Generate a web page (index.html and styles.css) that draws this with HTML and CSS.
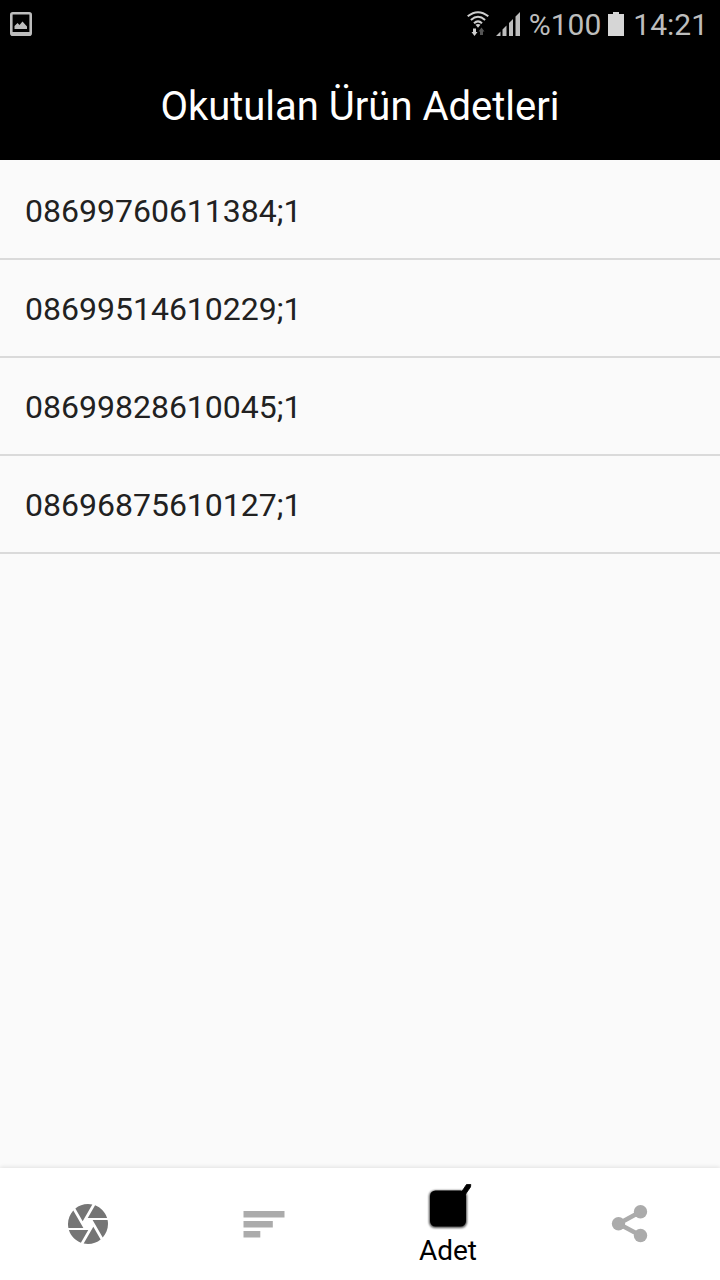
FILE: index.html
```html
<!DOCTYPE html>
<html lang="tr">
<head>
  <meta charset="UTF-8">
  <title>Okutulan Ürün Adetleri</title>
  <link rel="stylesheet" href="styles.css">
</head>
<body>
  <div class="status-bar">
    <svg class="picture-icon" width="22" height="24" viewBox="0 0 22 24">
      <rect x="1.3" y="1.3" width="19.4" height="21.4" rx="1.5" fill="none" stroke="#bdbdbd" stroke-width="2.6"/>
      <path d="M2 20h18v3H2zM4.500 17v-3l3-3 2 2 3-3.500 4.500 5V17z" fill="#bdbdbd"/>
    </svg>
    <div class="status-right">
      <svg class="wifi-icon" width="22" height="26" viewBox="0 0 22 26">
        <g fill="none" stroke="#cfcfcf" stroke-width="2">
          <path d="M.7 5.300Q11-2.900 21.300 5.300"/>
          <path d="M3.900 8.900Q11 2.700 18.100 8.900"/>
          <path d="M7 12.200Q11 8.500 15 12.200"/>
        </g>
        <path d="M8.500 13.800Q11 12.300 13.500 13.800L11 16.800z" fill="#cfcfcf"/>
        <path d="M6 17.500h3v3.500h1.500l-3 4-3-4H6z" fill="#cfcfcf"/>
        <path d="M13 24v-3.500h-1.500l3-4 3 4H16V24z" fill="#555"/>
      </svg>
      <svg class="signal-icon" width="24" height="24" viewBox="0 0 24 24">
        <path d="M0 24l4.500-4.500V24zM6.500 17.500l4-4V24h-4zM13 11l4-4v17h-4zM19.500 4.500L24 0v24h-4.500z" fill="#bdbdbd"/>
      </svg>
      <span class="percent">%100</span>
      <svg class="battery-icon" width="16" height="24" viewBox="0 0 16 24">
        <path d="M5 0h6v2h5v22H0V2h5z" fill="#d6d6d6"/>
      </svg>
      <span class="clock">14:21</span>
    </div>
  </div>

  <h1 class="title">Okutulan Ürün Adetleri</h1>

  <ul class="list">
    <li>08699760611384;1</li>
    <li>08699514610229;1</li>
    <li>08699828610045;1</li>
    <li>08696875610127;1</li>
  </ul>

  <nav class="bottom-nav">
    <div class="tab">
      <svg width="48" height="48" viewBox="0 0 24 24">
        <path fill="#757575" d="M9.400 10.500l4.770-8.260C13.470 2.090 12.750 2 12 2c-2.400 0-4.600.85-6.320 2.250l3.660 6.350.06-.1zM21.540 9c-.92-2.920-3.150-5.260-6-6.340L11.880 9h9.660zm.26 1h-7.490l.29.5 4.760 8.250C21 16.970 22 14.610 22 12c0-.69-.07-1.350-.2-2zM8.540 12l-3.900-6.750C3.010 7.030 2 9.390 2 12c0 .69.07 1.350.2 2h7.490l-1.150-2zm-6.080 3c.92 2.920 3.150 5.260 6 6.340L12.120 15H2.460zm11.270 0l-3.900 6.760c.7.150 1.420.24 2.170.24 2.400 0 4.600-.85 6.320-2.250l-3.660-6.350-.93 1.600z"/>
      </svg>
    </div>
    <div class="tab">
      <svg width="48" height="48" viewBox="0 0 48 48">
        <path fill="#ababab" d="M3.500 11h41v6.500h-41zM3.500 21h29.300v6.500H3.500zM3.500 31h16.800v6.500H3.500z"/>
      </svg>
    </div>
    <div class="tab active">
      <svg width="48" height="48" viewBox="0 0 48 48">
        <defs>
          <filter id="shade" x="-20%" y="-20%" width="140%" height="140%">
            <feGaussianBlur stdDeviation="1.3"/>
          </filter>
        </defs>
        <rect x="5" y="6.500" width="38" height="37.500" rx="6" fill="#000" opacity=".7" filter="url(#shade)"/>
        <rect x="6" y="6.500" width="36" height="36" rx="5.500"/>
        <path d="M37.500 8L42.500 .5h4.300l-.3 2.500L41 11z" stroke="#000" stroke-width=".8" stroke-linejoin="round"/>
      </svg>
      <span class="tab-label">Adet</span>
    </div>
    <div class="tab">
      <svg class="share-icon" width="48" height="48" viewBox="0 0 48 48">
        <g fill="#ababab">
          <circle cx="12.500" cy="23.700" r="6.700"/>
          <circle cx="34.500" cy="11.800" r="6.700"/>
          <circle cx="34.500" cy="35.500" r="6.700"/>
        </g>
        <path d="M34.500 11.800l-22 11.900 22 11.800" fill="none" stroke="#ababab" stroke-width="4.500"/>
      </svg>
    </div>
  </nav>
</body>
</html>
```
FILE: styles.css
```css
* { box-sizing: border-box; }
body {
  margin: 0;
  height: 1280px;
  display: flex;
  flex-direction: column;
  background: #fafafa;
  color: #212121;
  font-family: Roboto, sans-serif;
  overflow: hidden;
}
svg { display: block; flex: none; }

.status-bar {
  height: 48px;
  padding: 0 12px 0 10px;
  display: flex;
  align-items: center;
  justify-content: space-between;
  background: #000;
  color: #bdbdbd;
  font-size: 30px;
  line-height: 48px;
}
.status-right { display: flex; align-items: center; }
.percent, .clock { padding-top: 1px; }
.wifi-icon { margin-right: 7px; }
.signal-icon { margin-right: 9px; }
.percent { margin-right: 7px; }
.battery-icon { margin-right: 9px; }

.title {
  height: 112px;
  margin: 0;
  background: #000;
  color: #fff;
  font-size: 40px;
  font-weight: 400;
  line-height: 118px;
  text-align: center;
}

.list {
  flex: 1;
  margin: 0;
  padding: 2px 0 0;
  list-style: none;
}
.list li {
  height: 98px;
  padding-left: 25px;
  border-bottom: 2px solid #dadada;
  font-size: 32px;
  line-height: 98px;
}

.bottom-nav {
  height: 112px;
  display: grid;
  grid-template-columns: 176px 176px 192px 176px;
  background: #fff;
  box-shadow: 0 -1px 4px rgba(0, 0, 0, .1);
}
.tab {
  display: flex;
  flex-direction: column;
  align-items: center;
  justify-content: center;
}
.active {
  justify-content: flex-start;
  padding-top: 16px;
  color: #000;
}
.tab-label { font-size: 28px; line-height: 38px; }
.share-icon { margin-right: 4px; }
```
